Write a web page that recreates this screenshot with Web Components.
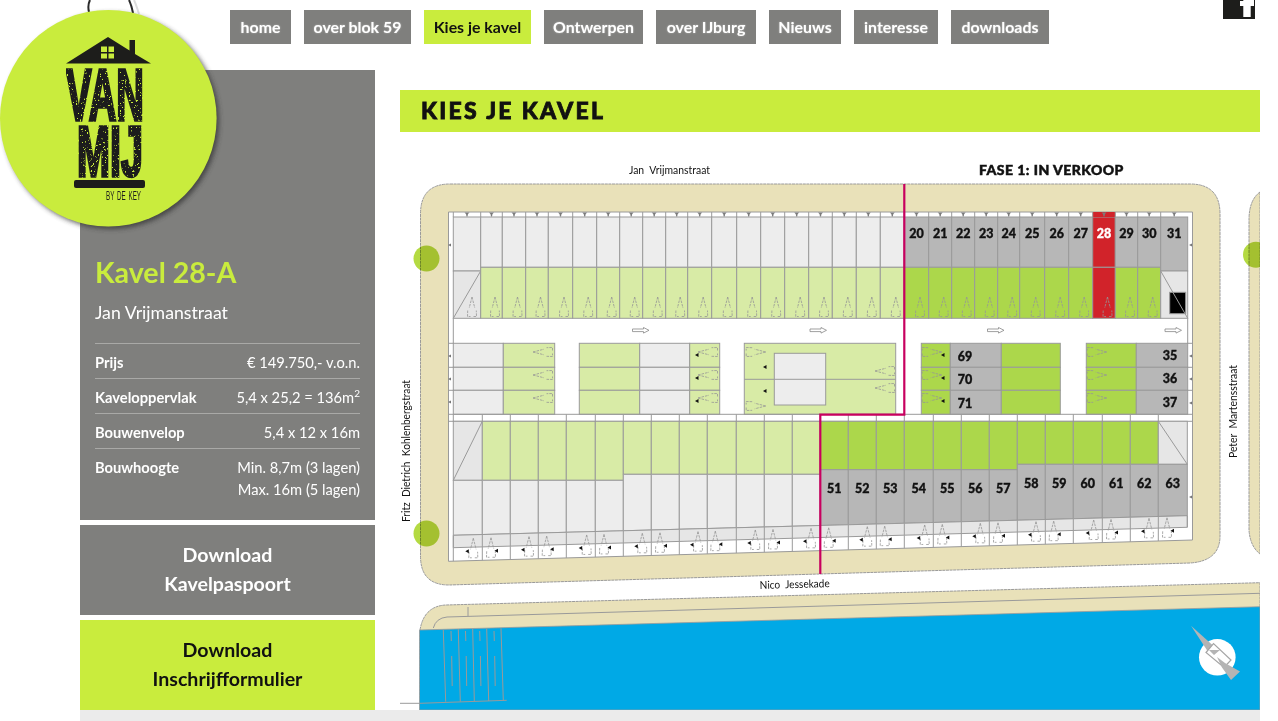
<!DOCTYPE html>
<html lang="nl">
<head>
<meta charset="utf-8">
<title>Van Mij - Kies je kavel</title>
<style>
  html, body { margin: 0; padding: 0; background: #fff; overflow: hidden; }
  body { font-family: Lato, "Liberation Sans", sans-serif; height: 721px; }
  .page { width: 1180px; margin-left: 80px; position: relative; }
  .main { display: flex; align-items: flex-start; }
  .content { width: 860px; padding: 20px 0 0 25px; }
</style>
</head>
<body>
<div class="page">
  <logo-badge></logo-badge>
  <top-nav>
    <nav-item style="width:61px">home</nav-item>
    <nav-item style="width:107px">over blok 59</nav-item>
    <nav-item style="width:107px" active>Kies je kavel</nav-item>
    <nav-item style="width:99px">Ontwerpen</nav-item>
    <nav-item style="width:100px">over IJburg</nav-item>
    <nav-item style="width:72px">Nieuws</nav-item>
    <nav-item style="width:84px">interesse</nav-item>
    <nav-item style="width:98px">downloads</nav-item>
  </top-nav>
  <div class="main">
    <side-bar>
      <kavel-panel name="Kavel 28-A" street="Jan Vrijmanstraat">
        <spec-row label="Prijs">€ 149.750,- v.o.n.</spec-row>
        <spec-row label="Kaveloppervlak">5,4 x 25,2 = 136m<sup style="font-size:10px;line-height:0">2</sup></spec-row>
        <spec-row label="Bouwenvelop">5,4 x 12 x 16m</spec-row>
        <spec-row label="Bouwhoogte">Min. 8,7m (3 lagen)<br>Max. 16m (5 lagen)</spec-row>
      </kavel-panel>
      <download-button>Download<br>Kavelpaspoort</download-button>
      <download-button accent>Download<br>Inschrijfformulier</download-button>
    </side-bar>
    <div class="content">
      <page-title>KIES JE KAVEL</page-title>
      <site-plan></site-plan>
    </div>
  </div>
  <page-foot></page-foot>
</div>

<script>
const LIME = '#c9ec3d'
const GREY = '#7f7f7d'

class LogoBadge extends HTMLElement {
  constructor() {
    super()
    this.attachShadow({ mode: 'open' }).innerHTML = `
      <style>
        :host { display: block; position: absolute; left: -80px; top: 0; width: 230px; height: 240px; z-index: 5; }
        svg { display: block; overflow: visible; }
        text { font-family: "Liberation Sans", sans-serif; font-weight: 700; fill: #1d1d1b; }
      </style>
      <svg width="230" height="240" viewBox="0 0 230 240">
        <defs>
          <filter id="shade" x="-20%" y="-20%" width="140%" height="140%">
            <feGaussianBlur stdDeviation="2.4"/>
          </filter>
          <filter id="grunge" x="0" y="0" width="100%" height="100%">
            <feTurbulence type="fractalNoise" baseFrequency="0.55" numOctaves="2" seed="4" result="n"/>
            <feColorMatrix in="n" type="matrix" values="0 0 0 0 0  0 0 0 0 0  0 0 0 0 0  0 0 0 -14 10.2" result="m"/>
            <feComposite in="SourceGraphic" in2="m" operator="in"/>
          </filter>
        </defs>
        <path d="M90 0 C88 4 88 8 89 12" fill="none" stroke="#2a2a2a" stroke-width="2"/>
        <path d="M129 0 C131 4 132 8 133 13" fill="none" stroke="#2a2a2a" stroke-width="2"/>
        <path d="M134 0 C136 4 137 8 139 14" fill="none" stroke="#ddd" stroke-width="2"/>
        <circle cx="111" cy="121" r="108" fill="#333" opacity=".75" filter="url(#shade)"/>
        <circle cx="108.3" cy="118.3" r="108.3" fill="${LIME}"/>
        <path d="M66 63.500 L108 37 L129.500 50.500 L129.500 40 L135 40 L135 54 L151 63.500 Z" fill="#1d1d1b"/>
        <path d="M101 46.500h6v5.500h-6zM108.500 46.500h5.500v5.500h-5.500zM101 53.500h6v5h-6zM108.500 53.500h5.500v5h-5.500z" fill="${LIME}"/>
        <g filter="url(#grunge)">
          <text x="66" y="119.500" font-size="73" textLength="78" lengthAdjust="spacingAndGlyphs" stroke="#1d1d1b" stroke-width="3.400">VAN</text>
          <text x="77" y="175.500" font-size="70" textLength="66" lengthAdjust="spacingAndGlyphs" stroke="#1d1d1b" stroke-width="3.400">MIJ</text>
        </g>
        <rect x="74" y="180" width="71" height="8" rx="2" fill="#1d1d1b"/>
        <text x="106" y="200" font-size="12" textLength="35" lengthAdjust="spacingAndGlyphs" style="font-weight:400;word-spacing:2px">BY DE KEY</text>
      </svg>`
  }
}

class TopNav extends HTMLElement {
  constructor() {
    super()
    this.attachShadow({ mode: 'open' }).innerHTML = `
      <style>
        :host { display: flex; gap: 13px; height: 60px; padding: 10px 0 0 150px; position: relative; }
        .fb { position: absolute; left: 1143px; top: 0; }
      </style>
      <slot></slot>
      <svg class="fb" width="32" height="19" viewBox="0 0 32 19">
        <rect width="32" height="19" fill="#1d1d1b"/>
        <path d="M20.300 17 V6 H17 V1 H20.300 V0 H31 V1 H31 V6 H27.700 V17 Z" fill="#fff"/>
      </svg>`
  }
}

class NavItem extends HTMLElement {
  constructor() {
    super()
    this.attachShadow({ mode: 'open' }).innerHTML = `
      <style>
        :host {
          display: block; height: 34px; text-align: center;
          background: ${GREY}; color: #fff;
          font: 700 15.900px/34px Lato, "Liberation Sans", sans-serif;
          white-space: nowrap; text-shadow: 0 0 2px rgba(255,255,255,.45);
        }
        :host([active]) { background: ${LIME}; color: #111; text-shadow: none; }
      </style>
      <slot></slot>`
  }
}

class SideBar extends HTMLElement {
  constructor() {
    super()
    this.attachShadow({ mode: 'open' }).innerHTML = `
      <style>:host { display: flex; flex-direction: column; gap: 5px; width: 295px; flex: none; }</style>
      <slot></slot>`
  }
}

class KavelPanel extends HTMLElement {
  constructor() {
    super()
    this.attachShadow({ mode: 'open' }).innerHTML = `
      <style>
        :host { display: block; box-sizing: border-box; height: 450px; padding: 183px 15px 0; background: ${GREY}; color: #fff; }
        h2 { margin: 0; font: 700 28.600px/38px Lato, "Liberation Sans", sans-serif; color: ${LIME}; }
        p { margin: 3px 0 11px; font: 400 17.700px/38px Lato, "Liberation Sans", sans-serif; color: #fff; }
      </style>
      <h2></h2>
      <p></p>
      <slot></slot>`
    this.shadowRoot.querySelector('h2').textContent = this.getAttribute('name')
    this.shadowRoot.querySelector('p').textContent = this.getAttribute('street')
  }
}

class SpecRow extends HTMLElement {
  constructor() {
    super()
    this.attachShadow({ mode: 'open' }).innerHTML = `
      <style>
        :host {
          display: flex; justify-content: space-between; box-sizing: border-box;
          padding: 7px 0 5px; border-top: 1px solid #a9a9a7;
          font: 400 14.700px/22px Lato, "Liberation Sans", sans-serif; color: #fff;
        }
        b { font-weight: 700; }
        span { text-align: right; }
      </style>
      <b></b><span><slot></slot></span>`
    this.shadowRoot.querySelector('b').textContent = this.getAttribute('label')
  }
}

class DownloadButton extends HTMLElement {
  constructor() {
    super()
    this.attachShadow({ mode: 'open' }).innerHTML = `
      <style>
        :host {
          display: flex; align-items: center; justify-content: center; text-align: center;
          box-sizing: border-box; height: 90px; padding-bottom: 2px;
          background: ${GREY}; color: #fff;
          font: 700 19.600px/29px Lato, "Liberation Sans", sans-serif;
        }
        :host([accent]) { background: ${LIME}; color: #111; }
      </style>
      <div><slot></slot></div>`
  }
}

class PageTitle extends HTMLElement {
  constructor() {
    super()
    this.attachShadow({ mode: 'open' }).innerHTML = `
      <style>
        :host {
          display: block; height: 42px; padding-left: 21px; background: ${LIME}; color: #111;
          font: 900 23px/41px Lato, "Liberation Sans", sans-serif; letter-spacing: 2.300px;
          -webkit-text-stroke: .8px #111;
        }
      </style>
      <slot></slot>`
  }
}

class PageFoot extends HTMLElement {
  constructor() {
    super()
    this.attachShadow({ mode: 'open' }).innerHTML = `
      <style>:host { display: block; height: 11px; background: #ebebeb; }</style>`
  }
}

// kavel geometry, all in page coordinates
const topX = [453.3,480.7,502.3,525.7,548.3,572.7,596.7,619.7,642.7,665.7,687.7,711.7,736.7,760.7,784.7,808.7,832.3,856.3,880.3,904.3,928.7,951.7,974.7,997.7,1019.7,1044.7,1068.7,1092.7,1115.3,1137.7,1160.7,1187.7]
const botX = [453.3,482.3,510.3,538.3,566.3,595.3,623.3,651.3,679.3,707.3,736.3,764.3,792.3,820.3,848.3,876.3,904.3,933.3,961.3,989.3,1017.3,1045.3,1073.3,1102.3,1130.3,1158.3,1187.3]
const botCars = [473.3,491,529,546.7,586.7,604,642.3,660,698,715.3,755.3,773,811,828.7,867.3,884.7,924.7,942.3,980.3,998,1036,1053.7,1093.7,1111,1149,1167]

const C = { line: '#9a9a9a', light: '#ededed', corner: '#e6e6e6', pale: '#d8eba6', green: '#acd74b', dark: '#b7b7b7', red: '#d1232a', sand: '#e9e1b9', water: '#00a9e6', pink: '#c8005f' }
const y1 = x => 535.3 - (x - 453.3) * 0.0267
const y2 = x => 547.7 - (x - 453.3) * 0.0278
const y3 = x => 561.3 - (x - 448.5) * 0.0286

function box(x1, ya, x2, yb, fill) {
  return `<rect x="${x1}" y="${ya}" width="${x2 - x1}" height="${yb - ya}" fill="${fill}" stroke="${C.line}"/>`
}
function line(a, b, c, d) {
  return `<path d="M${a} ${b} L${c} ${d}" stroke="${C.line}" fill="none"/>`
}
function car(x, y, rot) {
  return `<use href="#car" transform="translate(${x} ${y}) rotate(${rot || 0})"/>`
}
function num(n, x, y, cls) {
  return `<text class="num ${cls || ''}" x="${x}" y="${y}">${n}</text>`
}

function buildTop() {
  let s = ''
  for (let i = 0; i < topX.length - 1; i++) {
    const a = topX[i], b = topX[i + 1], mid = (a + b) / 2
    const nr = i >= 19 ? i + 1 : 0
    const isRed = nr === 28
    const last = i === topX.length - 2
    if (i > 0 && !last) {
      s += box(a, 217, b, 267.3, isRed ? C.red : nr ? C.dark : C.light)
      s += box(a, 267.3, b, 318.3, isRed ? C.red : nr ? C.green : C.pale)
      s += car(mid + 3.5, 297)
    }
    if (i === 0) {
      s += box(a, 217, b, 271, C.light) + box(a, 271, b, 318.3, C.corner) + line(a, 318.3, b, 271) + car(472, 297)
    }
    if (last) {
      s += box(a, 217, b, 271, C.dark) + box(a, 271, b, 318.3, C.corner)
      s += `<rect x="1169.700" y="292.300" width="16" height="21.400" fill="#000" stroke="${C.line}"/>` + line(a, 271, b, 318.3)
    }
    if (isRed) s += `<rect x="${a}" y="212" width="${b - a}" height="5" fill="${C.red}"/>`
    s += line(a, 212, a, 217)
    s += `<use href="#tee" x="${mid}" y="212"/>`
    if (i >= 19) s += num(i + 1, mid, 238, isRed ? 'white' : '')
  }
  return s
}

function buildMiddle() {
  const rows = [343.3, 367.3, 390.3, 414.3]
  const parts = [
    [453.3, 503.3, C.light], [503.3, 554.7, C.pale],
    [579.3, 639.7, C.pale], [639.7, 689.7, C.light], [689.7, 719.7, C.pale],
    [921.3, 950.3, C.green], [950.3, 1001.3, C.dark], [1001.3, 1060.3, C.green],
    [1086.3, 1136.3, C.green], [1136.3, 1187.7, C.dark]
  ]
  let s = ''
  parts.forEach(p => {
    for (let r = 0; r < 3; r++) s += box(p[0], rows[r], p[1], rows[r + 1], p[2])
  })
  // block around the square
  s += box(744.3, 343.3, 895.7, 414.3, C.pale) + line(744.3, 379.3, 895.7, 379.3) + box(774.3, 353.3, 825.7, 405, C.light) + line(774.3, 379.3, 825.7, 379.3)
  const ys = [352, 375, 398]
  ys.forEach(y => {
    s += car(533, y, -90) + car(698, y, -90) + car(941.7, y, 90) + car(1106.7, y, 90)
    s += `<use href="#dot" x="697" y="${y + 3}"/><use href="#dot" x="943" y="${y + 3}"/>`
  })
  s += car(765.7, 352, 90) + car(765.7, 406, 90) + car(875, 371, -90) + car(875, 388, -90)
  s += `<use href="#dot" x="765" y="367"/><use href="#dot" x="765" y="391"/>`
  ;[[69, 356], [70, 379], [71, 403]].forEach(r => { s += num(r[0], 965, r[1] + 4.5) })
  ;[[35, 355], [36, 378], [37, 402]].forEach(r => { s += num(r[0], 1170, r[1] + 4.5) })
  return s
}

function buildBottom() {
  let s = ''
  for (let i = 0; i < botX.length - 1; i++) {
    const a = botX[i], b = botX[i + 1], mid = (a + b) / 2
    let topEnd = 480.3, topFill = C.pale, lowFill = C.light
    if (i >= 6) topEnd = 474.3
    if (i >= 13) { topEnd = 469.7; topFill = C.green; lowFill = C.dark }
    if (i >= 20) { topEnd = 464.3 }
    if (i === 0 || i === 25) topFill = C.corner
    s += box(a, 421.3, b, topEnd, topFill)
    s += `<path d="M${a} ${topEnd} L${b} ${topEnd} L${b} ${y1(b)} L${a} ${y1(a)} Z" fill="${lowFill}" stroke="${C.line}"/>`
    s += line(a, y2(a), a, y3(a))
    s += line(a, 414.3, a, 421.3)
    if (i === 0) s += line(a, topEnd, b, 421.3)
    if (i === 25) s += line(a, 421.3, b, topEnd)
    if (i >= 13) s += num(i + 38, mid, topEnd + 23.5)
  }
  s += `<path d="M453.300 ${y1(453.3)} L1187.300 ${y1(1187.3)} L1187.300 ${y2(1187.3)} L453.300 ${y2(453.3)} Z" fill="${C.corner}" stroke="${C.line}"/>`
  botX.forEach(x => { s += line(x, y1(x), x, y2(x)) })
  botCars.forEach((x, i) => {
    const y = 538.3 - (x - 473) * 0.0295
    s += car(x, y)
    s += `<use href="#dot" x="${x + (i % 2 ? 5.5 : -6)}" y="${y + 13}"/>`
  })
  return s
}

function buildPier() {
  let s = ''
  const v = [[443.3, 630, 445.7, 701.7], [458.3, 629.300, 460.3, 701.700], [472.7, 629, 474.3, 701], [486.7, 628.700, 488.7, 701], [501, 628.300, 503.3, 700.700]]
  v.forEach(p => { s += line(p[0], p[1], p[2], p[3]) })
  s += line(420, 703.3, 506.7, 700.3) + line(396, 703.3, 419.500, 703.3)
  ;[451, 465.5, 479.7, 494].forEach(x => {
    s += line(x, 631, x + .3, 641) + line(x + .7, 656, x + 1.2, 686)
  })
  return s
}

class SitePlan extends HTMLElement {
  constructor() {
    super()
    this.attachShadow({ mode: 'open' }).innerHTML = `
      <style>
        :host { display: block; width: 860px; height: 578px; }
        svg { display: block; }
        text { font-family: Lato, "Liberation Sans", sans-serif; fill: #111; }
        .street { font-size: 11px; word-spacing: 3px; }
        .fase { font-weight: 900; font-size: 14px; letter-spacing: .45px; stroke: #111; stroke-width: .5px; }
        .num { font-weight: 900; font-size: 12.500px; text-anchor: middle; stroke: #111; stroke-width: .35px; }
        .white { fill: #fff; stroke: #fff; }
      </style>
      <svg width="860" height="578" viewBox="400 132 860 578">
        <defs>
          <g id="car" fill="none" stroke="#959595" stroke-width=".8" stroke-dasharray="2.600 1">
            <path d="M0 0 L-2.800 11 M0 0 L2.800 11"/>
            <path d="M-4.300 13.500 L-4.500 19.500 L-1.500 19.500 M1.500 19.500 L4.500 19.500 L4.300 13.500"/>
          </g>
          <path id="tee" d="M-2.500 0.500 H2.500 L1 2 L.5 4.500 H-.5 L-1 2 Z" fill="#7c7c7c"/>
          <path id="dot" d="M-2 0 L1.500 -2 L1.500 2 Z" fill="#111"/>
          <path id="flow" d="M0 -1.300 H11 V-2.800 L16.500 0 L11 2.800 V1.300 H0 Z" fill="#fff" stroke="#888" stroke-width=".8"/>
          <path id="side" d="M0 -1.500 L-3 0 L0 1.500 Z" fill="#777"/>
        </defs>

        <!-- sand around the block -->
        <path d="M450 184 H1190 Q1220 184 1220 214 V536 Q1220 561 1190 563 L449 585 Q420.500 585 420.500 556 V214 Q420.500 184 450 184 Z" fill="${C.sand}" stroke="${C.line}" stroke-dasharray="3 .6"/>
        <path d="M1260 192 Q1249 200 1249 220 V530 Q1250 546 1260 554 Z" fill="${C.sand}" stroke="${C.line}" stroke-dasharray="3 .6"/>
        <path d="M448.500 212 H1192.500 V540 L448.500 561.300 Z" fill="#fff" stroke="${C.line}"/>

        ${buildTop()}
        ${line(453.3, 318.3, 453.3, 343.3)}
        ${line(1187.7, 318.3, 1187.7, 343.3)}
        ${buildMiddle()}
        ${line(448.5, 343.3, 453.3, 343.3)}${line(448.5, 367.3, 453.3, 367.3)}${line(448.5, 390.3, 453.3, 390.3)}
        ${line(1187.7, 367.3, 1192.5, 367.3)}${line(1187.7, 390.3, 1192.5, 390.3)}${line(1187.7, 343.3, 1192.5, 343.3)}
        ${line(448.5, 414.3, 1192.5, 414.3)}
        ${line(448.5, 421.3, 1192.5, 421.3)}
        ${buildBottom()}

        <use href="#flow" x="632.500" y="330.300"/>
        <use href="#flow" x="810" y="330.300"/>
        <use href="#flow" x="987.500" y="330.300"/>
        <use href="#flow" x="1165" y="330.300"/>

        <use href="#side" x="451" y="245"/><use href="#side" x="451" y="356"/><use href="#side" x="451" y="379"/><use href="#side" x="451" y="402"/>
        <use href="#side" x="1192" y="245"/><use href="#side" x="1192" y="356"/><use href="#side" x="1192" y="379"/><use href="#side" x="1192" y="403"/><use href="#side" x="1192" y="497"/>

        <g fill="#b4da42" style="mix-blend-mode:multiply">
          <circle cx="426.500" cy="258.500" r="13"/>
          <circle cx="426.500" cy="533.500" r="13"/>
          <circle cx="1256" cy="254.700" r="13"/>
        </g>

        <path d="M904.300 184 V414.700 H820.300 V574" fill="none" stroke="${C.pink}" stroke-width="2.200"/>

        <!-- quay and water -->
        <path d="M420 630 Q424 606 446 605 L1260 582.700 V710 H420 Z" fill="${C.sand}" stroke="${C.line}" stroke-dasharray="3 .6"/>
        <path d="M433.300 628 Q436 618 447 617 L1260 593.300" fill="none" stroke="${C.line}"/>
        ${line(468, 607, 468, 616)}
        <path d="M419.500 630 L1260 606.700 V710 H419.500 Z" fill="${C.water}" stroke="${C.line}" stroke-width=".8"/>
        ${buildPier()}

        <circle cx="1217.300" cy="657.300" r="18.300" fill="#fff"/>
        <path d="M1191 625.700 L1213 645.500 L1207.500 651 Z" fill="#b4b4b4"/>
        <path d="M1206 652.500 L1213.500 643.500 L1231 660 L1224 667.500 Z" fill="#fff" stroke="#a5a5a5" stroke-width="1.200"/>
        <path d="M1209 650 L1220 650 L1214 655 Z M1217 657 L1225 663 L1240 671.500 L1231 680 L1222 667.500 Z" fill="#b4b4b4"/>

        <text class="street" x="629" y="173.500" textLength="81" lengthAdjust="spacingAndGlyphs">Jan Vrijmanstraat</text>
        <text class="fase" x="979" y="175">FASE 1: IN VERKOOP</text>
        <text class="street" transform="translate(759.800 589) rotate(-1.500)" textLength="70" lengthAdjust="spacingAndGlyphs">Nico Jessekade</text>
        <text class="street" transform="translate(410 522) rotate(-90)" textLength="142" lengthAdjust="spacingAndGlyphs">Fritz Dietrich Kohlenbergstraat</text>
        <text class="street" transform="translate(1237 458) rotate(-90)" textLength="93" lengthAdjust="spacingAndGlyphs">Peter Martensstraat</text>
      </svg>`
  }
}

customElements.define('logo-badge', LogoBadge)
customElements.define('top-nav', TopNav)
customElements.define('nav-item', NavItem)
customElements.define('side-bar', SideBar)
customElements.define('kavel-panel', KavelPanel)
customElements.define('spec-row', SpecRow)
customElements.define('download-button', DownloadButton)
customElements.define('page-title', PageTitle)
customElements.define('page-foot', PageFoot)
customElements.define('site-plan', SitePlan)
</script>
</body>
</html>
